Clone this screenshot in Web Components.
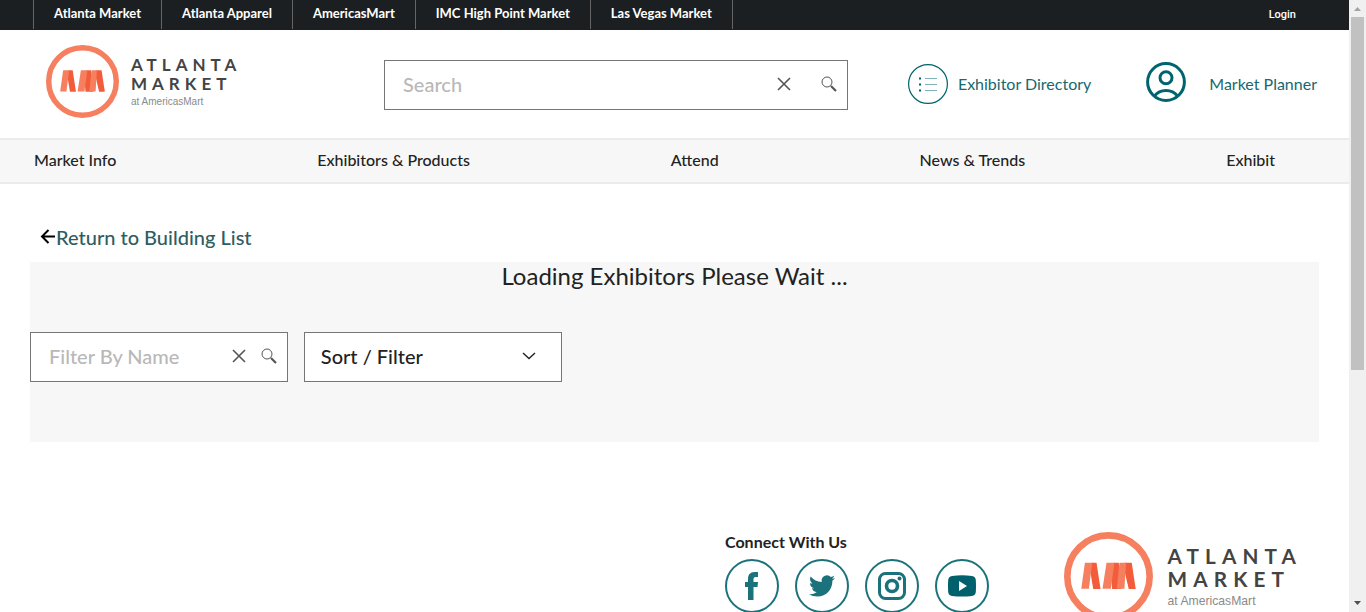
<!DOCTYPE html>
<html lang="en">
<head>
<meta charset="utf-8">
<title>Atlanta Market - Exhibitors</title>
<style>
  body { margin: 0; background: #fff; color: #222; font-family: Lato, "Liberation Sans", sans-serif; }
</style>
</head>
<body>
<market-page>
  <top-bar></top-bar>
  <site-header></site-header>
  <main-nav></main-nav>
  <exhibitor-list></exhibitor-list>
  <site-footer></site-footer>
</market-page>

<script>
const define = (name, html, setup) => {
  const template = document.createElement('template');
  template.innerHTML = html;
  customElements.define(name, class extends HTMLElement {
    constructor() {
      super();
      this.attachShadow({ mode: 'open' }).append(template.content.cloneNode(true));
    }
    connectedCallback() { if (setup) setup(this, this.shadowRoot); }
  });
};

define('brand-logo', `
  <style>
    :host { display: block; width: 192px; }
    a, a > svg { display: block; }
    a > svg { width: 100%; overflow: visible; }
    .name { font: 700 17px Lato, sans-serif; letter-spacing: 5px; fill: #444; }
    .sub { font: 400 10px "Liberation Sans", sans-serif; fill: #8a8a8a; }
  </style>
  <a href="#" aria-label="Atlanta Market home">
    <svg viewBox="0 0 192 73">
      <svg width="73" height="73" viewBox="5 6 268 268">
        <circle cx="139" cy="140" r="124" fill="none" stroke="#f57f5f" stroke-width="20"/>
        <g fill="#f25c3b">
          <path d="M87 99h16l12 79H93l-10-60z"/>
          <path d="M154 99h16l8 79h-28l-4-50z"/>
          <path d="M188 99h21l12 79h-21l-14-60z"/>
        </g>
        <g fill="#f57f5f">
          <path d="M68 99h22L80 177H57z"/>
          <path d="M133 99h24l-11 78h-25z"/>
          <path d="M172 99h20l-5 78h-23z"/>
        </g>
      </svg>
      <text class="name" x="85" y="26">ATLANTA</text>
      <text class="name" x="85" y="45">MARKET</text>
      <text class="sub" x="85" y="60">at AmericasMart</text>
    </svg>
  </a>`);

define('top-bar', `
  <style>
    :host { display: flex; justify-content: space-between; height: 30px; padding: 0 53px 0 33px; background: #1c1f22; }
    nav { display: flex; height: 29px; border-left: 1px solid #666; }
    a { color: #fff; text-decoration: none; }
    nav a { padding: 0 20px; border-right: 1px solid #666; font-size: 13px; font-weight: 700; line-height: 27px; white-space: nowrap; }
    .login { font: 500 11px/30px Roboto, sans-serif; }
  </style>
  <nav aria-label="Markets">
    <a href="#">Atlanta Market</a><a href="#">Atlanta Apparel</a><a href="#">AmericasMart</a><a href="#">IMC High Point Market</a><a href="#">Las Vegas Market</a>
  </nav>
  <a class="login" href="#">Login</a>`);

define('search-box', `
  <style>
    :host { display: block; --gap: 15px; }
    form { display: flex; align-items: center; box-sizing: border-box; height: 50px; padding: 0 10px 2px 18px; border: 1px solid #767676; background: #fff; }
    input { flex: 1; min-width: 0; padding: 0; border: 0; outline: 0; background: none; color: #222; font: 500 20px/24px Lato, sans-serif; }
    input::placeholder { color: #b8b8b8; opacity: 1; }
    button { display: block; padding: 0; border: 0; background: none; cursor: pointer; }
    button + button { margin-left: var(--gap); }
    svg { display: block; fill: none; stroke: #555; }
  </style>
  <form role="search">
    <input type="text">
    <button type="button" aria-label="Clear"><svg width="14" height="14" stroke-width="1.6"><path d="M1 1l12 12M13 1L1 13"/></svg></button>
    <button type="submit" aria-label="Search"><svg width="16" height="16"><circle cx="6" cy="6" r="5"/><path d="M10 10l5 5" stroke-width="2.2"/></svg></button>
  </form>`, (host, root) => {
  const input = root.querySelector('input');
  input.placeholder = host.getAttribute('label');
  input.setAttribute('aria-label', host.getAttribute('label'));
  root.querySelector('[type=button]').onclick = () => { input.value = ''; };
  root.querySelector('form').onsubmit = e => e.preventDefault();
});

define('icon-link', `
  <style>
    :host { display: block; }
    a { display: flex; align-items: center; gap: var(--gap, 10px); color: #17686f; font-size: 16px; line-height: 20px; text-decoration: none; white-space: nowrap; }
  </style>
  <a href="#"><slot name="icon"></slot><slot></slot></a>`);

define('site-header', `
  <style>
    :host { display: flex; align-items: center; box-sizing: border-box; height: 108px; padding: 0 32px 0 46px; }
    brand-logo { margin-right: 146px; margin-bottom: 5px; }
    search-box { flex: 1; --gap: 30px; margin-right: 60px; margin-top: 2px; }
    .planner { --gap: 23px; margin-left: 55px; }
    svg { display: block; fill: none; stroke: #00646e; }
  </style>
  <brand-logo></brand-logo>
  <search-box label="Search"></search-box>
  <icon-link>
    <svg slot="icon" width="40" height="40" viewBox="0 0 40 40">
      <circle cx="20" cy="20" r="19.4" stroke-width="1.2"/>
      <path d="M11 14.5h2M11 20.5h2M11 26.500h2" stroke-width="2"/>
      <path d="M17 14.500h12M17 20.500h12M17 26.500h12" stroke="#7fb1b6"/>
    </svg>Exhibitor Directory
  </icon-link>
  <icon-link class="planner">
    <svg slot="icon" width="40" height="44" viewBox="0 0 40 44" stroke-width="3">
      <circle cx="20" cy="20" r="18.400"/><circle cx="20" cy="15.700" r="6"/>
      <path d="M8.500 34c3-4 7-5.500 11.500-5.500s8.500 1.500 11.500 5.500"/>
    </svg>Market Planner
  </icon-link>`);

define('main-nav', `
  <style>
    :host { display: block; border: solid #ebebeb; border-width: 2px 0; background: #f7f7f7; }
    nav { display: flex; justify-content: space-between; padding: 0 74px 2px 34px; }
    a { color: #222; font-size: 16px; font-weight: 500; line-height: 40px; text-decoration: none; white-space: nowrap; }
  </style>
  <nav aria-label="Main">
    <a href="#">Market Info</a><a href="#">Exhibitors &amp; Products</a><a href="#">Attend</a><a href="#">News &amp; Trends</a><a href="#">Exhibit</a>
  </nav>`);

define('drop-down', `
  <style>
    :host { display: block; }
    label { display: grid; align-items: center; }
    select { grid-area: 1 / 1; width: 100%; height: 50px; padding: 0 16px 2px; border: 1px solid #767676; border-radius: 0; background: #fff; color: #222; font: 500 20px/24px Lato, sans-serif; appearance: none; }
    svg { grid-area: 1 / 1; justify-self: end; margin: 0 26px 2px 0; fill: none; stroke: #222; stroke-width: 1.4; pointer-events: none; }
  </style>
  <label>
    <select aria-label="Sort / Filter"><option>Sort / Filter</option></select>
    <svg width="14" height="8"><path d="M1 1l6 5.500L13 1"/></svg>
  </label>`);

define('exhibitor-list', `
  <style>
    :host { display: block; padding: 40px 30px 0; }
    .back { display: flex; align-items: center; width: fit-content; margin: 0 10px 12px; color: #2f5d62; font-size: 20px; font-weight: 500; line-height: 26px; text-decoration: none; }
    .back svg { display: block; fill: none; stroke: #000; stroke-width: 2; }
    section { display: block; box-sizing: border-box; min-height: 180px; background: #f7f7f7; }
    h2 { margin: 0 0 42px; font-size: 24px; font-weight: 400; line-height: 28px; text-align: center; }
    .filters { display: flex; gap: 16px; }
    .filters > * { width: 20%; }
  </style>
  <a class="back" href="#"><svg width="16" height="16"><path d="M15 7.500H2M8.500 1L2 7.500 8.500 14"/></svg>Return to Building List</a>
  <section>
    <h2>Loading Exhibitors Please Wait ...</h2>
    <div class="filters">
      <search-box label="Filter By Name"></search-box>
      <drop-down></drop-down>
    </div>
  </section>`);

define('social-link', `
  <style>
    :host { display: block; }
    a { display: grid; place-items: center; box-sizing: border-box; width: 54px; height: 54px; border: 2px solid #1b727b; border-radius: 50%; color: #1b727b; }
  </style>
  <a href="#"><slot></slot></a>`, (host, root) => {
  root.querySelector('a').setAttribute('aria-label', host.getAttribute('label'));
});

define('site-footer', `
  <style>
    :host { display: flex; justify-content: flex-end; gap: 75px; padding: 90px 51px 30px; }
    h3 { margin: 0 0 7px; font-size: 16px; font-weight: 700; line-height: 20px; }
    .row { display: flex; gap: 16px; }
    svg { display: block; fill: currentColor; }
    brand-logo { width: 234px; }
  </style>
  <div>
    <h3>Connect With Us</h3>
    <div class="row">
      <social-link label="Facebook"><svg width="16" height="28" viewBox="0 0 16 28"><path d="M4 28V15H1V10h3V7c0-4 2-7 6.500-7H14v5h-2.500C10 5 9.500 6 9.500 7.500V10H14l-.5 5h-4v13z"/></svg></social-link>
      <social-link label="Twitter"><svg width="26" height="26" viewBox="0 0 24 24"><path d="M23.953 4.570a10 10 0 01-2.825.775 4.958 4.958 0 002.163-2.723c-.951.555-2.005.959-3.127 1.184a4.920 4.920 0 00-8.384 4.482C7.690 8.095 4.067 6.130 1.640 3.162a4.822 4.822 0 00-.666 2.475c0 1.710.87 3.213 2.188 4.096a4.904 4.904 0 01-2.228-.616v.06a4.923 4.923 0 003.946 4.827 4.996 4.996 0 01-2.212.085 4.936 4.936 0 004.604 3.417 9.867 9.867 0 01-6.102 2.105c-.39 0-.779-.023-1.170-.067a13.995 13.995 0 007.557 2.209c9.053 0 13.998-7.496 13.998-13.985 0-.21 0-.42-.015-.63A9.935 9.935 0 0024 4.590z"/></svg></social-link>
      <social-link label="Instagram"><svg width="28" height="28" viewBox="0 0 28 28"><g fill="none" stroke="currentColor"><rect x="1.500" y="1.500" width="25" height="25" rx="6" stroke-width="3"/><circle cx="14" cy="14" r="5.500" stroke-width="3.600"/></g><circle cx="21.500" cy="6.500" r="2"/></svg></social-link>
      <social-link label="YouTube"><svg width="28" height="22" viewBox="0 0 28 22"><path fill="#00606b" d="M4 1Q14-.5 24 1q3.500.5 3.800 4 .4 6 0 12-.3 3.500-3.800 4-10 1-20 0-3.500-.5-3.800-4-.4-6 0-12Q.5 1.500 4 1z"/><path fill="#fff" d="M11 6v10l8-5z"/></svg></social-link>
    </div>
  </div>
  <brand-logo></brand-logo>`);

define('page-scrollbar', `
  <style>
    :host { display: flex; flex-direction: column; align-items: center; background: #f0f0f0; }
    svg { display: block; flex: none; }
    .track { flex: 1; align-self: stretch; padding: 0 2px; }
    .thumb { height: 61%; background: #c1c1c1; }
  </style>
  <svg width="17" height="17"><path d="M5 11h7L8.500 7z" fill="#a3a3a3"/></svg>
  <div class="track"><div class="thumb"></div></div>
  <svg width="17" height="17"><path d="M5 6h7L8.500 10z" fill="#505050"/></svg>`);

define('market-page', `
  <style>
    :host { display: grid; grid-template-columns: minmax(0, 1fr) 17px; grid-template-rows: 100vh; overflow: hidden; }
    .content { overflow: hidden; }
  </style>
  <div class="content"><slot></slot></div>
  <page-scrollbar aria-hidden="true"></page-scrollbar>`);
</script>
</body>
</html>
